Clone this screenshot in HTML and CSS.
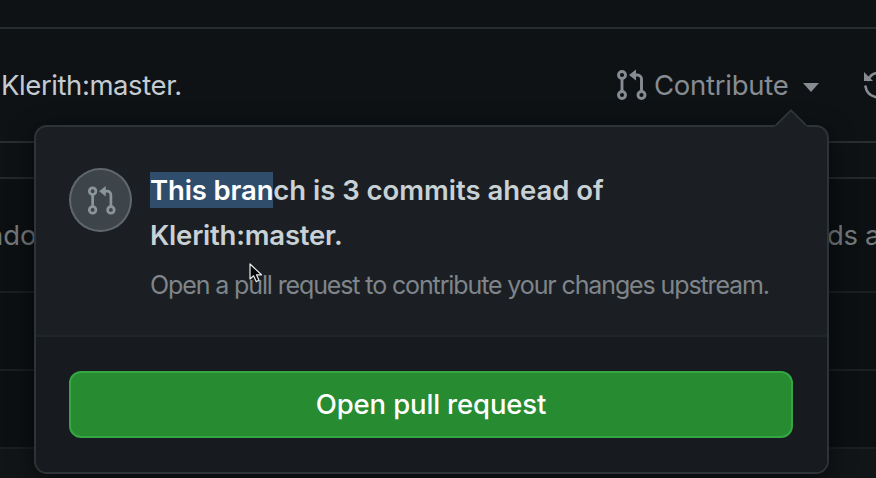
FILE: index.html
```
<!DOCTYPE html>
<html lang="en">
<head>
<meta charset="utf-8">
<title>Contribute</title>
<link rel="stylesheet" href="styles.css">
</head>
<body>
<main class="page">
  <div class="topspace"></div>
  <section class="branch-bar">
    <span class="branch-name">Klerith:master.</span>
    <div class="actions">
      <svg class="pr-icon" viewBox="0 0 32 32"><use href="#pr"/></svg>
      <span class="contribute">Contribute</span>
      <span class="caret"></span>
      <svg class="sync" viewBox="0 0 28 30"><path d="M4 10A12 12 0 0 1 25 8M1.500 16.500A13 13 0 0 0 24 23" fill="none" stroke="#868c92" stroke-width="2.6" stroke-linecap="round"/><path d="M0 2v9h9z" fill="#868c92"/></svg>
    </div>
  </section>
  <section class="files">
    <div class="file-row first"><span class="left-text">ndo</span><span class="right-text">ds a</span></div>
    <div class="file-row"></div>
    <div class="file-row"></div>
    <div class="file-row shade"></div>
  </section>
</main>
<div class="popover">
  <svg class="notch" viewBox="0 0 32 18"><path d="M0 18V17L2 16 16 1.4 30 16l2 1v1z" fill="#1b1f23"/><path d="M1 16.3 16 1.4 31 16.3" fill="none" stroke="#2e3337" stroke-width="2"/></svg>
  <div class="message">
    <div class="badge"><svg class="pr-icon" viewBox="0 0 32 32"><use href="#pr"/></svg></div>
    <div class="copy">
      <h1 class="title"><span class="line one"><mark>This bran</mark>ch is 3 commits ahead of</span><span class="line two">Klerith:master.</span></h1>
      <p class="hint">Open a pull request to contribute your changes upstream.</p>
    </div>
  </div>
  <div class="footer"><button class="open">Open pull request</button></div>
</div>
<svg class="cursor" viewBox="0 0 14 20"><path d="M1 1v15l3.6-3.2 2.6 5.8 2.8-1.3-2.5-5.5h5z" fill="#050607" stroke="#e8eaec" stroke-width="1.2" stroke-linejoin="round"/></svg>
<svg width="0" height="0" class="defs"><defs><g id="pr"><g fill="none" stroke="currentColor" stroke-width="2.9"><circle cx="6" cy="6" r="3.5"/><circle cx="6" cy="26" r="3.5"/><circle cx="25.5" cy="26" r="3.5"/><path d="M6 9.5v13M19 6h2.5a4 4 0 0 1 4 4v12.500"/></g><path d="M13 6 20 .4v11.200z" fill="currentColor"/></g></defs></svg>
</body>
</html>
```
FILE: styles.css
```
* { box-sizing: border-box; }
body { margin: 0; width: 876px; height: 478px; overflow: hidden; background: #0e1215; font-family: Inter, "Liberation Sans", sans-serif; }
.page { height: 478px; overflow: hidden; }
.topspace { height: 27px; }
.branch-bar { height: 116px; border-top: 2px solid #272c2f; border-bottom: 2px solid #292d30; display: flex; justify-content: space-between; padding-left: 1px; color: #c4cbd1; font-size: 27.5px; line-height: 112px; }
.branch-name { letter-spacing: -0.42px; }
.actions { display: flex; align-items: center; width: 260px; height: 112px; color: #868c92; flex: none; }
.pr-icon { width: 32px; height: 32px; flex: none; }
.contribute { margin-left: 6px; width: 136px; letter-spacing: -0.25px; line-height: 114px; white-space: nowrap; }
.caret { margin: 4px 0 0 14px; border: 8px solid transparent; border-top: 9px solid #868c92; border-bottom: 0; flex: none; }
.sync { width: 28px; height: 30px; margin-left: 45px; flex: none; }
.files { margin-top: 34px; border-top: 2px solid #24282b; }
.file-row { height: 78px; border-bottom: 2px solid #1a1e21; background: #0c1012; }
.file-row.first { height: 114px; display: flex; justify-content: space-between; font-size: 27.5px; line-height: 113px; color: #73787c; }
.file-row.shade { height: 34px; background: #121518; }
.left-text { margin-left: -13px; }
.right-text { width: 49px; white-space: nowrap; letter-spacing: -0.4px; }
.popover { position: absolute; left: 34px; top: 125px; width: 795px; height: 349px; border: 2px solid #2e3337; border-radius: 13px; background: #1b1f23; box-shadow: 0 6px 24px rgba(0,2,4,.6); }
.notch { position: absolute; left: 739px; top: -18px; width: 32px; height: 18px; }
.message { height: 210px; border-bottom: 2px solid #202529; display: flex; padding: 41px 0 0 33px; }
.badge { width: 63px; height: 64px; border: 2px solid #61686d; border-radius: 50%; background: #3d444a; color: #8b959c; display: flex; align-items: center; justify-content: center; flex: none; }
.badge .pr-icon { width: 30px; height: 31px; margin-left: 2px; }
.copy { margin-left: 18px; }
.title { margin: 0; color: #c8d1d5; font-size: 27.5px; font-weight: 600; line-height: 45px; white-space: nowrap; }
.line { display: block; }
.one { letter-spacing: -0.02px; }
.one mark { letter-spacing: -0.15px; }
.two { letter-spacing: -0.22px; }
mark { background: #304d6c; color: #fff; padding: 1px 0; }
.hint { margin: 6px 0 0; color: #7f858a; font-size: 25px; line-height: 42px; letter-spacing: -1.12px; white-space: nowrap; }
.footer { height: 135px; background: #171a1e; border-radius: 0 0 11px 11px; padding: 34px 34px 0 33px; }
.open { display: block; width: 100%; height: 67px; border: 2px solid #34a742; border-radius: 12px; background: #278b32; color: #fff; font: 500 27.5px/62px Inter, sans-serif; padding: 0 0 1px; letter-spacing: -0.15px; }
.cursor { position: absolute; left: 249px; top: 263px; width: 14px; height: 20px; }
.defs { position: absolute; }
```
